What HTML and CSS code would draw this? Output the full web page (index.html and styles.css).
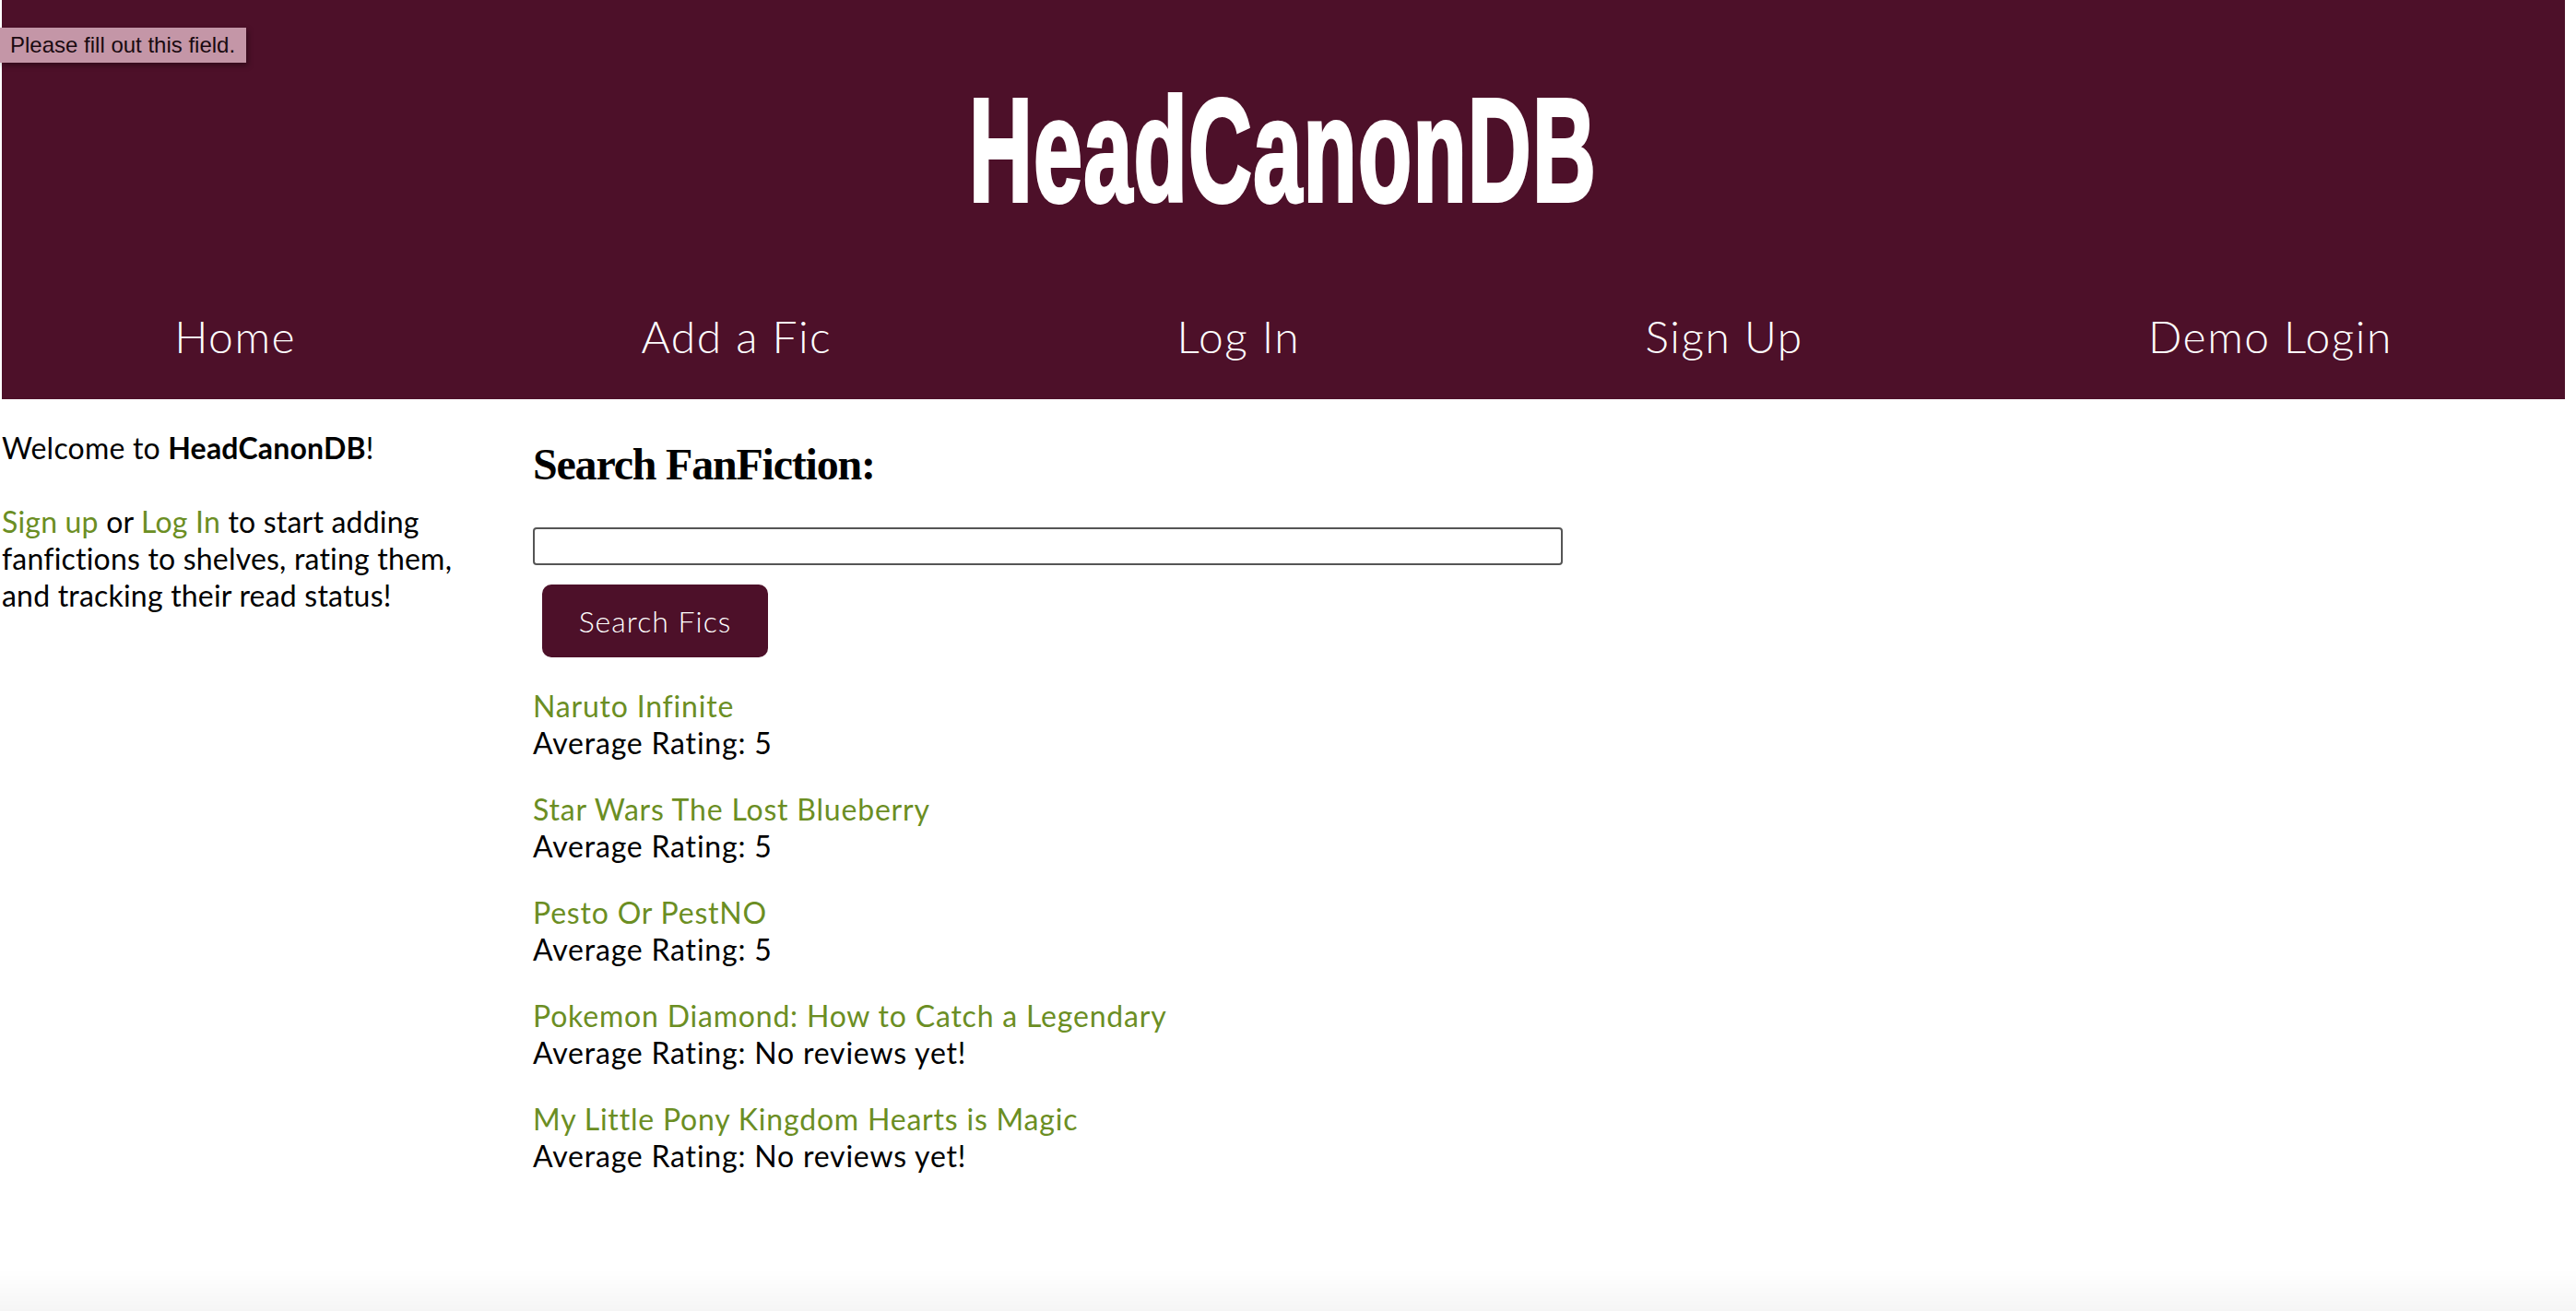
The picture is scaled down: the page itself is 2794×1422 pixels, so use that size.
FILE: index.html
```html
<!DOCTYPE html>
<html lang="en">
<head>
<meta charset="utf-8">
<title>HeadCanonDB</title>
<link rel="stylesheet" href="styles.css">
</head>
<body>
<header class="site-header">
  <h1 class="logo"><span class="logo-text">HeadCanonDB</span></h1>
  <nav class="main-nav">
    <a class="nav-link" href="#">Home</a>
    <a class="nav-link" href="#">Add a Fic</a>
    <a class="nav-link" href="#">Log In</a>
    <a class="nav-link" href="#">Sign Up</a>
    <a class="nav-link" href="#">Demo Login</a>
  </nav>
</header>
<div class="tooltip">Please fill out this field.</div>
<main class="layout">
  <aside class="sidebar">
    <p class="welcome">Welcome to <b>HeadCanonDB</b>!<br><br><a class="link" href="#">Sign up</a> or <a class="link" href="#">Log In</a> to start adding fanfictions to shelves, rating them, and tracking their read status!</p>
  </aside>
  <section class="content">
    <h2 class="search-title">Search FanFiction:</h2>
    <form class="search-form">
      <input class="search-input" type="text" required>
      <button class="search-btn" type="button">Search Fics</button>
    </form>
    <ul class="fic-list">
      <li class="fic"><a class="link" href="#">Naruto Infinite</a><br>Average Rating: 5</li>
      <li class="fic"><a class="link" href="#">Star Wars The Lost Blueberry</a><br>Average Rating: 5</li>
      <li class="fic"><a class="link" href="#">Pesto Or PestNO</a><br>Average Rating: 5</li>
      <li class="fic"><a class="link" href="#">Pokemon Diamond: How to Catch a Legendary</a><br>Average Rating: No reviews yet!</li>
      <li class="fic"><a class="link" href="#">My Little Pony Kingdom Hearts is Magic</a><br>Average Rating: No reviews yet!</li>
    </ul>
  </section>
</main>
<div class="bottom-fade"></div>
</body>
</html>
```
FILE: styles.css
```css
html, body {
  margin: 0;
  padding: 0;
  background: #ffffff;
}
body {
  padding-left: 2px;
  width: 2780px;
  font-family: Lato, "Open Sans", sans-serif;
  color: #000;
}
.site-header {
  background: #4d1029;
  padding-top: 84px;
  padding-bottom: 39px;
}
.logo {
  margin: 0;
  text-align: center;
  height: 159px;
  line-height: 159px;
  font-size: 159px;
  font-family: "Liberation Sans", Arial, sans-serif;
  font-weight: 700;
  color: #fff;
}
.logo-text {
  display: inline-block;
  transform: scaleX(0.6);
  -webkit-text-stroke: 4px #fff;
  letter-spacing: 2px;
}
.main-nav {
  margin-top: 93px;
  display: flex;
  justify-content: space-around;
  height: 58px;
  line-height: 58px;
}
.nav-link {
  color: #fff;
  text-decoration: none;
  font-size: 48px;
  font-weight: 300;
  letter-spacing: 1.5px;
}
.tooltip {
  position: absolute;
  left: 0;
  top: 30px;
  width: 267px;
  height: 38px;
  box-sizing: border-box;
  background: #c496a7;
  color: #1a0a10;
  font-family: "Liberation Sans", Arial, sans-serif;
  font-size: 24px;
  line-height: 38px;
  padding-left: 11px;
  white-space: nowrap;
  box-shadow: 2px 3px 6px rgba(0,0,0,0.35);
}
.layout {
  display: grid;
  grid-template-columns: 514px 1fr;
  column-gap: 62px;
}
.sidebar {
  padding-top: 33px;
}
.welcome {
  margin: 0;
  font-size: 32px;
  line-height: 40px;
  font-weight: 400;
  letter-spacing: 0.2px;
}
.welcome b {
  font-weight: 700;
}
.link {
  color: olivedrab;
  text-decoration: none;
}
.content {
  padding-top: 43px;
}
.search-title {
  margin: 0;
  font-family: "Liberation Serif", "Times New Roman", serif;
  font-weight: 700;
  font-size: 48px;
  line-height: 56px;
  letter-spacing: -1.2px;
}
.search-form {
  margin-top: 40px;
}
.search-input {
  display: block;
  box-sizing: border-box;
  width: 1117px;
  height: 41px;
  border: 2px solid #555;
  border-radius: 4px;
  margin: 0;
  padding: 0 6px;
}
.search-btn {
  display: block;
  margin: 21px 0 0 10px;
  width: 245px;
  height: 79px;
  background: #4d1029;
  color: #fff;
  border: none;
  border-radius: 10px;
  font-family: Lato, "Open Sans", sans-serif;
  font-size: 32px;
  font-weight: 300;
  letter-spacing: 1px;
}
.fic-list {
  list-style: none;
  margin: 33px 0 0;
  padding: 0;
}
.fic {
  font-size: 32px;
  line-height: 40px;
  font-weight: 400;
  letter-spacing: 0.8px;
  margin-bottom: 32px;
}
.bottom-fade {
  position: fixed;
  left: 0;
  right: 0;
  bottom: 0;
  height: 45px;
  background: linear-gradient(to bottom, rgba(0,0,0,0), rgba(0,0,0,0.04));
  pointer-events: none;
}
```
